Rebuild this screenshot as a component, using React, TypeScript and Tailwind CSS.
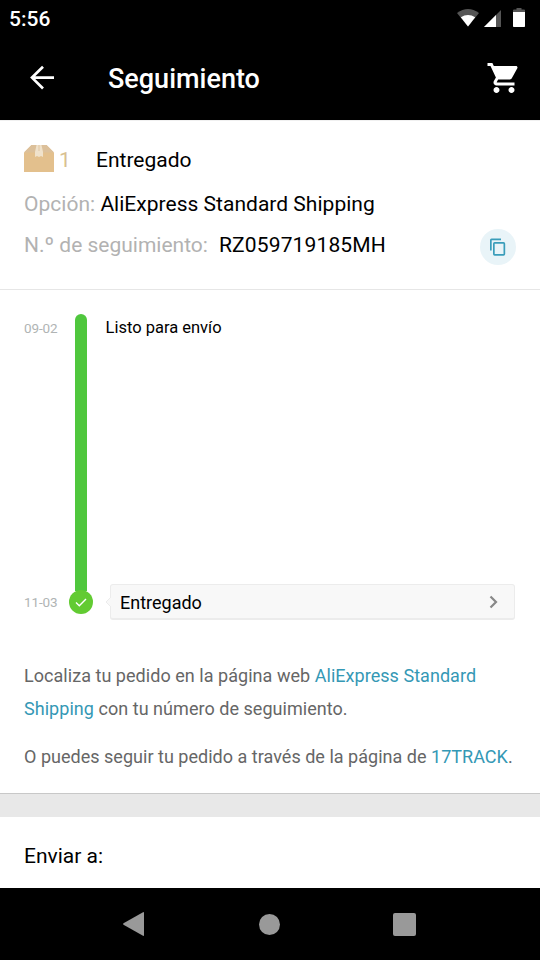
import type { ReactNode } from "react";

function StatusBar() {
  return (
    <div className="flex h-9 items-center justify-between pl-[9px] text-[21px] font-medium leading-[38px] text-white">
      <span className="pt-0.5">5:56</span>
      <svg width="84" height="36" viewBox="0 0 84 36" aria-hidden="true">
        {/* wifi */}
        <path d="M1 13Q12 5 23 13L12 26.500Z" fill="#555" />
        <path d="M4.800 17.300Q12 12.500 19.200 17.300L12 26.500Z" fill="#fff" />
        {/* mobile signal */}
        <path d="M45 10V27H28Z" fill="#555" />
        <path d="M40 15V27H28Z" fill="#fff" />
        {/* battery */}
        <path d="M57 12V10.500Q57 9.500 58 9.500H60.500V8H65.500V9.500H68Q69 9.500 69 10.500V12Z" fill="#555" />
        <path d="M57 12H69V26.200Q69 27 68.200 27H57.800Q57 27 57 26.200Z" fill="#fff" />
      </svg>
    </div>
  );
}

function AppBar() {
  return (
    <div className="flex h-[84px] items-center pl-[29px] pr-[18.5px] text-white">
      <svg width="26" height="26" viewBox="0 0 26 26" fill="none" stroke="#fff" strokeWidth="2.7" aria-hidden="true">
        <path d="M25 12.600H3M14 1.700L3 12.600L14 23.500" />
      </svg>
      <h1 className="ml-[53px] flex-1 pt-0.5 text-[27px] font-medium leading-8">Seguimiento</h1>
      <svg width="36" height="36" viewBox="0 0 24 24" fill="#fff" aria-hidden="true">
        <path d="M7 18c-1.100 0-1.990.900-1.990 2S5.900 22 7 22s2-.900 2-2-.900-2-2-2zM1 2v2h2l3.600 7.590-1.350 2.450c-.160.280-.250.610-.250.960 0 1.100.900 2 2 2h12v-2H7.420c-.140 0-.250-.110-.250-.250l.030-.120.900-1.630h7.450c.750 0 1.410-.410 1.750-1.030l3.580-6.490c.080-.140.120-.310.120-.480 0-.550-.450-1-1-1H5.210l-.940-2H1zm16 16c-1.100 0-1.990.900-1.990 2s.890 2 1.990 2 2-.900 2-2-.900-2-2-2z" />
      </svg>
    </div>
  );
}

function PackageIcon() {
  return (
    <svg className="-mt-[3px]" width="30" height="27" viewBox="0 0 30 27" aria-hidden="true">
      <path d="M7.500 0H22.500L30 7.500V27H0V7.500Z" fill="#e3c08d" />
      <path d="M7.500 0H22.500L30 7.500H0Z" fill="#dcc09a" />
      <path d="M12.500 0H17.500L19 7V12L17 11L15 12L13 11L11 12V7Z" fill="#f0e2cb" />
      <path d="M15 0V6" stroke="#dcc09a" strokeWidth="0.8" />
    </svg>
  );
}

function Summary() {
  return (
    <section className="h-[170px] border-b border-t border-b-[#e6e6e6] border-t-[#f0f0f0] px-6 pt-6 text-[21px] leading-[30px]">
      <div className="flex items-center">
        <PackageIcon />
        <span className="ml-[5px] w-[37px] text-[#d9c091]">1</span>
        <span>Entregado</span>
      </div>
      <p className="mt-3.5 whitespace-pre tracking-[0.02px]">
        <span className="text-[#b2b2b2]">Opción: </span>AliExpress Standard Shipping
      </p>
      <div className="mt-2.5 flex h-9 items-center">
        <span className="-mt-1 w-[195px] text-[#b2b2b2]">N.º de seguimiento:</span>
        <span className="-mt-1 flex-1 tracking-[0.14px]">RZ059719185MH</span>
        <button className="flex size-9 items-center justify-center rounded-full bg-[#e9f4f8]">
          <svg width="16" height="18" viewBox="0 0 16 18" fill="none" stroke="#3a9dba" strokeWidth="1.7" aria-hidden="true">
            <path d="M0.850 12.500V2Q0.850 1.350 1.500 1.350H11" />
            <rect x="3.850" y="4.850" width="10.500" height="12" rx="0.8" />
          </svg>
        </button>
      </div>
    </section>
  );
}

function Timeline() {
  return (
    <section className="flex h-[330px] px-6 pt-6">
      <div className="flex h-[300px] w-[45px] flex-col justify-between text-[13.5px] leading-5 tracking-[-0.1px] text-[#b0b4b4]">
        <span className="mt-1">09-02</span>
        <span className="mb-0.5">11-03</span>
      </div>
      <div className="flex w-6 flex-col items-center">
        <div className="h-[277px] w-3 rounded-t-full bg-[#4fc73d]" />
        <div className="-mt-px flex size-6 items-center justify-center rounded-full bg-[#62cb32]">
          <svg width="12" height="9" viewBox="0 0 12 9" fill="none" stroke="#fff" strokeWidth="1.4" aria-hidden="true">
            <path d="M1 4.600L4.300 7.800L11 1" />
          </svg>
        </div>
      </div>
      <div className="flex h-[306px] flex-1 flex-col justify-between">
        <p className="ml-[12.5px] pt-1 text-[16.5px] leading-5">Listo para envío</p>
        <div className="flex items-center pl-3">
          <svg className="z-10 -mr-px" width="6" height="12" viewBox="0 0 6 12" aria-hidden="true">
            <path d="M6 1L1 6L6 11" fill="#f8f8f8" stroke="#ececec" />
          </svg>
          <button className="flex h-9 w-[405px] items-center justify-between rounded-[3px] border border-b-2 border-[#ececec] bg-[#f8f8f8] pl-[9px] pr-4 text-[18px]">
            <span className="pt-0.5">Entregado</span>
            <svg width="10" height="14" viewBox="0 0 10 14" fill="none" stroke="#888" strokeWidth="2.2" aria-hidden="true">
              <path d="M2.500 1.500L8 7L2.500 12.500" />
            </svg>
          </button>
        </div>
      </div>
    </section>
  );
}

function Link({ children }: { children: ReactNode }) {
  return <a className="text-[#3498b5]">{children}</a>;
}

function Help() {
  return (
    <section className="h-[173px] whitespace-nowrap px-6 pt-[39px] text-[18px] leading-[33px] text-[#666]">
      <p className="tracking-[0.04px]">
        Localiza tu pedido en la página web <Link>AliExpress Standard</Link>
        <br />
        <Link>Shipping</Link> con tu número de seguimiento.
      </p>
      <p className="mt-[15px] tracking-[0.02px]">
        O puedes seguir tu pedido a través de la página de <Link>17TRACK</Link>.
      </p>
    </section>
  );
}

function NavBar() {
  return (
    <nav className="flex h-[72px] items-center bg-black pl-[122px]">
      <svg width="24" height="26" viewBox="0 0 24 26" fill="#999" aria-hidden="true">
        <path d="M21 1.200Q22 .700 22 1.800V24.200Q22 25.300 21 24.800L1.500 13.700Q.500 13 1.500 12.300Z" />
      </svg>
      <div className="ml-[113px] size-[21px] rounded-full bg-[#999]" />
      <div className="ml-[113px] size-[23px] rounded-xs bg-[#999]" />
    </nav>
  );
}

export default function App() {
  return (
    <div className="flex h-[960px] w-[540px] flex-col overflow-hidden bg-white font-[Roboto,sans-serif] text-black">
      <header className="h-[120px] bg-black">
        <StatusBar />
        <AppBar />
      </header>
      <main className="flex-1">
        <Summary />
        <Timeline />
        <Help />
        <div className="h-6 border-t border-[#c8c8c8] bg-[#e8e8e8]" />
        <h2 className="px-6 pt-6 text-[21px] leading-[30px]">Enviar a:</h2>
      </main>
      <NavBar />
    </div>
  );
}
